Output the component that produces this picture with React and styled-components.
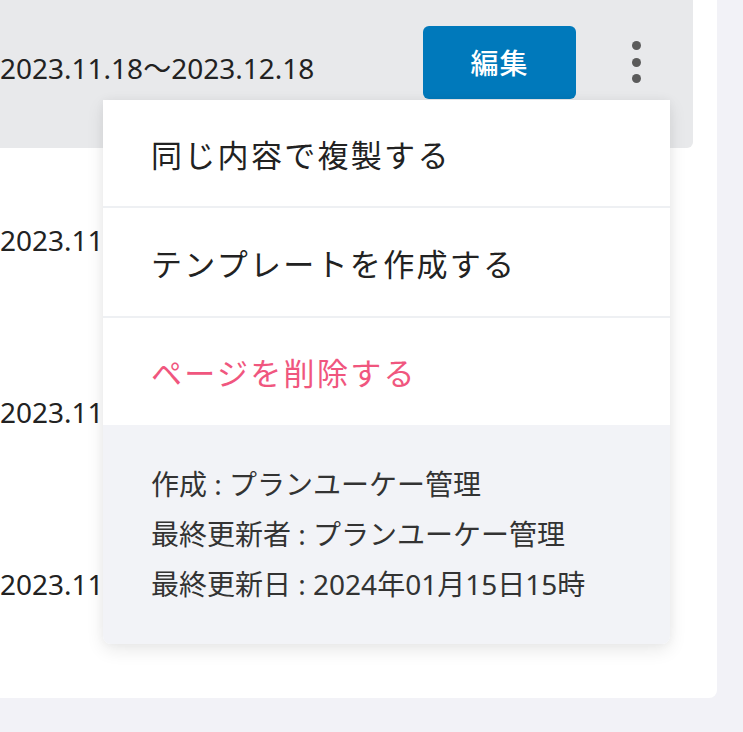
import React from 'react';
import styled, { createGlobalStyle } from 'styled-components';

const Global = createGlobalStyle`
  html, body { margin: 0; padding: 0; background: #f2f2f7; }
  body {
    font-family: "Noto Sans", "Noto Sans CJK JP", sans-serif;
    color: #222;
    overflow: hidden;
  }
  * { box-sizing: border-box; }
`;

const Page = styled.div`
  width: 743px;
  height: 732px;
  overflow: hidden;
`;

const Card = styled.div`
  width: 717px;
  margin-top: -24px;
  padding: 0 24px 34px 0;
  background: #fff;
  border-radius: 0 0 8px 0;
  display: flex;
  flex-direction: column;
`;

const Row = styled.div`
  position: relative;
  height: 172px;
  display: flex;
  align-items: center;
  padding-right: 27px;
  background: ${(p) => (p.$active ? '#e8e9eb' : 'transparent')};
  border-radius: 0 6px 6px 0;
`;

const DateText = styled.div`
  flex: 1;
  font-size: 28px;
  line-height: 40px;
  padding-top: 12px;
  white-space: nowrap;
  color: #222;
`;

const EditButton = styled.button`
  width: 153px;
  height: 73px;
  margin-right: 30px;
  border: none;
  border-radius: 6px;
  background: #0079bb;
  color: #fff;
  font-family: "Noto Sans", "Noto Sans CJK JP", sans-serif;
  font-size: 28px;
  font-weight: 500;
  letter-spacing: 1px;
  display: flex;
  align-items: center;
  justify-content: center;
  padding: 0;
`;

const Kebab = styled.div`
  width: 60px;
  height: 60px;
  display: flex;
  flex-direction: column;
  align-items: center;
  justify-content: center;
  gap: 7.5px;
`;

const Dot = styled.span`
  width: 9px;
  height: 9px;
  border-radius: 50%;
  background: #5b5b5b;
`;

const Menu = styled.div`
  position: absolute;
  top: 124px;
  left: 103px;
  width: 567px;
  z-index: 10;
  background: #fff;
  border-radius: 0 0 8px 8px;
  box-shadow: 0 6px 18px rgba(0, 0, 0, 0.09), 0 0 10px rgba(0, 0, 0, 0.04);
  overflow: hidden;
`;

const MenuItem = styled.div`
  height: ${(p) => p.$h || 108}px;
  display: flex;
  align-items: center;
  padding-left: 48px;
  font-size: 31px;
  letter-spacing: 2.3px;
  color: ${(p) => (p.$danger ? '#f0567e' : '#222')};
  border-bottom: ${(p) => (p.$last ? 'none' : '2px solid #eef0f3')};
`;

const Info = styled.div`
  background: #f2f3f7;
  padding: 34px 48px 35px;
  display: flex;
  flex-direction: column;
`;

const InfoLine = styled.div`
  font-size: 28px;
  line-height: 50px;
  color: #333;
  white-space: nowrap;
`;

const rows = [0, 1, 2, 3];

export default function App() {
  return (
    <Page>
      <Global />
      <Card>
        {rows.map((i) => (
          <Row key={i} $active={i === 0}>
            <DateText>2023.11.18〜2023.12.18</DateText>
            {i === 0 && (
              <>
                <EditButton>編集</EditButton>
                <Kebab>
                  <Dot />
                  <Dot />
                  <Dot />
                </Kebab>
                <Menu>
                  <MenuItem $h={108}>同じ内容で複製する</MenuItem>
                  <MenuItem $h={110}>テンプレートを作成する</MenuItem>
                  <MenuItem $h={107} $danger $last>ページを削除する</MenuItem>
                  <Info>
                    <InfoLine>作成 : プランユーケー管理</InfoLine>
                    <InfoLine>最終更新者 : プランユーケー管理</InfoLine>
                    <InfoLine>最終更新日 : 2024年01月15日15時</InfoLine>
                  </Info>
                </Menu>
              </>
            )}
          </Row>
        ))}
      </Card>
    </Page>
  );
}
